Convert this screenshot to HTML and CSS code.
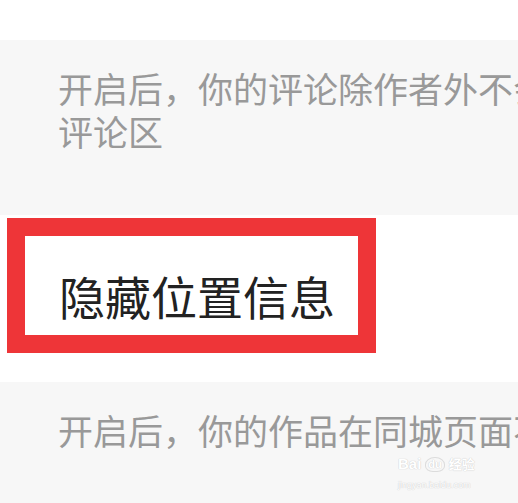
FILE: index.html
```html
<!DOCTYPE html>
<html lang="zh">
<head>
<meta charset="utf-8">
<link rel="stylesheet" href="styles.css">
</head>
<body>
<div class="page">
  <div class="top"></div>
  <section class="desc">
    <p class="line">开启后，你的评论除作者外不会出现在<br>评论区</p>
  </section>
  <section class="row">
    <h2 class="title">隐藏位置信息</h2>
  </section>
  <section class="desc desc-last">
    <p class="line">开启后，你的作品在同城页面不会展示</p>
  </section>
  <div class="annot"></div>
  <div class="watermark">
    <div class="wm-logo"><span>Bai</span><span class="wm-du">du</span><span class="wm-jy">经验</span></div>
    <div class="wm-url">jingyan.baidu.com</div>
  </div>
</div>
</body>
</html>
```

FILE: styles.css
```css
html, body {
  margin: 0;
  padding: 0;
  background: #ffffff;
}
.page {
  position: relative;
  width: 518px;
  height: 503px;
  overflow: hidden;
  font-family: "Noto Sans CJK SC", "Noto Sans", sans-serif;
}
.top {
  height: 40px;
}
.desc {
  background: #f7f7f7;
  height: 175px;
  box-sizing: border-box;
  padding: 26px 0 0 58px;
}
.desc-last {
  height: 121px;
}
.line {
  margin: 0;
  font-size: 35px;
  line-height: 43px;
  color: #999999;
  white-space: nowrap;
}
.row {
  height: 167px;
  box-sizing: border-box;
  padding: 0 0 8px 59px;
  display: flex;
  align-items: center;
}
.title {
  margin: 0;
  font-size: 46px;
  font-weight: 400;
  color: #222222;
  line-height: 1;
}
.annot {
  position: absolute;
  left: 7px;
  top: 218px;
  width: 333px;
  height: 99px;
  border: 18px solid #ee3538;
}
.watermark {
  position: absolute;
  left: 398px;
  top: 452px;
  width: 96px;
  color: #ffffff;
  font-family: "Liberation Sans", Arial, sans-serif;
  text-shadow: 0 0 1px #cfcfcf, 0 0 1px #cfcfcf;
}
.wm-logo {
  display: flex;
  align-items: center;
  gap: 4px;
  height: 24px;
  font-size: 15px;
  font-weight: 700;
  line-height: 18px;
  white-space: nowrap;
}
.wm-du {
  font-size: 11px;
  border: 1px solid #dcdcdc;
  border-radius: 50% 50% 40% 40%;
  padding: 0 2px;
  line-height: 13px;
}
.wm-jy {
  font-family: "Noto Sans CJK SC", sans-serif;
  font-size: 13px;
  line-height: 18px;
}
.wm-url {
  font-size: 9px;
  line-height: 12px;
  margin-top: 3px;
}
```
